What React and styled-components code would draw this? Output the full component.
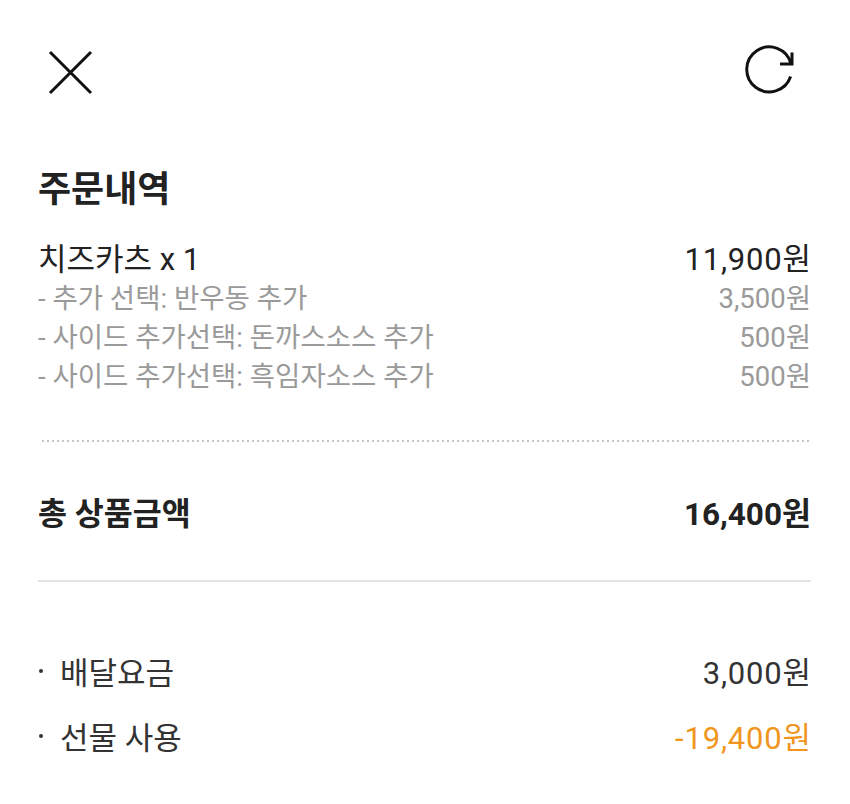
import React from "react";
import styled, { createGlobalStyle } from "styled-components";

const Global = createGlobalStyle`
  html, body { margin: 0; padding: 0; background: #ffffff; }
  body { font-family: Roboto, "Noto Sans CJK KR", sans-serif; color: #222; }
`;

const Page = styled.div`
  width: 850px;
  min-height: 804px;
  background: #fff;
`;

const Header = styled.header`
  height: 140px;
  display: flex;
  justify-content: space-between;
  align-items: flex-start;
  padding: 46px 57px 0 48px;
  box-sizing: border-box;
`;

const IconButton = styled.button`
  border: 0;
  background: none;
  padding: 0;
  margin-top: ${(p) => p.$top || 0}px;
  display: block;
  cursor: pointer;
  svg { display: block; overflow: visible; }
`;

const Body = styled.main`
  padding: 0 39px 0 38px;
`;

const Title = styled.h2`
  margin: 30px 0 0;
  font-size: 36px;
  line-height: 40px;
  font-weight: 700;
  color: #222;
`;

const Items = styled.div`
  margin-top: 27px;
`;

const Row = styled.div`
  display: flex;
  justify-content: space-between;
  align-items: center;
  height: ${(p) => p.$h || 39}px;
  font-size: ${(p) => p.$size || 31}px;
  font-weight: ${(p) => (p.$bold ? 700 : 400)};
  color: ${(p) => p.$color || "#222"};
  white-space: nowrap;
`;

const Amount = styled.span`
  color: ${(p) => p.$color || "inherit"};
  letter-spacing: ${(p) => (p.$tight ? 0 : 0.8)}px;
  margin-right: ${(p) => (p.$tight ? 0 : -0.8)}px;
`;

const Dotted = styled.div`
  margin: 47px 0 0 4px;
  height: 2px;
  background-image: linear-gradient(to right, #c4c4c4 40%, transparent 40%);
  background-size: 5px 2px;
  background-repeat: repeat-x;
`;

const TotalRow = styled(Row)`
  margin-top: 37px;
`;

const Solid = styled.div`
  margin-top: 37px;
  height: 2px;
  background: #e2e2e2;
`;

const Fees = styled.div`
  margin-top: 56px;
`;

const Label = styled.span`
  display: flex;
  align-items: center;
`;

const Bullet = styled.span`
  display: inline-block;
  width: 4px;
  height: 4px;
  border-radius: 50%;
  background: #333;
  margin: 0 17px 0 1px;
`;

const items = [
  ["- 추가 선택: 반우동 추가", "3,500원"],
  ["- 사이드 추가선택: 돈까스소스 추가", "500원"],
  ["- 사이드 추가선택: 흑임자소스 추가", "500원"],
];

export default function App() {
  return (
    <Page>
      <Global />
      <Header>
        <IconButton $top={4} aria-label="닫기">
          <svg width="44" height="44" viewBox="0 0 44 44">
            <path d="M2 2 L43 43 M43 2 L2 43" stroke="#111" strokeWidth="3" fill="none" />
          </svg>
        </IconButton>
        <IconButton aria-label="새로고침">
          <svg width="48" height="48" viewBox="0 0 48 48">
            <path
              d="M45.6 30.5 A22.5 22.5 0 1 1 46 17.6"
              stroke="#111"
              strokeWidth="3"
              fill="none"
            />
            <path d="M35 18 L47 18 L47 6.5" stroke="#111" strokeWidth="3" fill="none" />
          </svg>
        </IconButton>
      </Header>
      <Body>
        <Title>주문내역</Title>
        <Items>
          <Row $size={31} $color="#222">
            <span>치즈카츠 x 1</span>
            <Amount>11,900원</Amount>
          </Row>
          {items.map(([l, a]) => (
            <Row key={l} $size={27.5} $color="#9a9a9a">
              <span>{l}</span>
              <Amount $tight>{a}</Amount>
            </Row>
          ))}
        </Items>
        <Dotted />
        <TotalRow $h={64} $size={31.5} $bold>
          <span>총 상품금액</span>
          <Amount $tight>16,400원</Amount>
        </TotalRow>
        <Solid />
        <Fees>
          <Row $h={65} $size={31} $color="#333">
            <Label>
              <Bullet />배달요금
            </Label>
            <Amount>3,000원</Amount>
          </Row>
          <Row $h={65} $size={31} $color="#333">
            <Label>
              <Bullet />선물 사용
            </Label>
            <Amount $color="#f0961e">-19,400원</Amount>
          </Row>
        </Fees>
      </Body>
    </Page>
  );
}
